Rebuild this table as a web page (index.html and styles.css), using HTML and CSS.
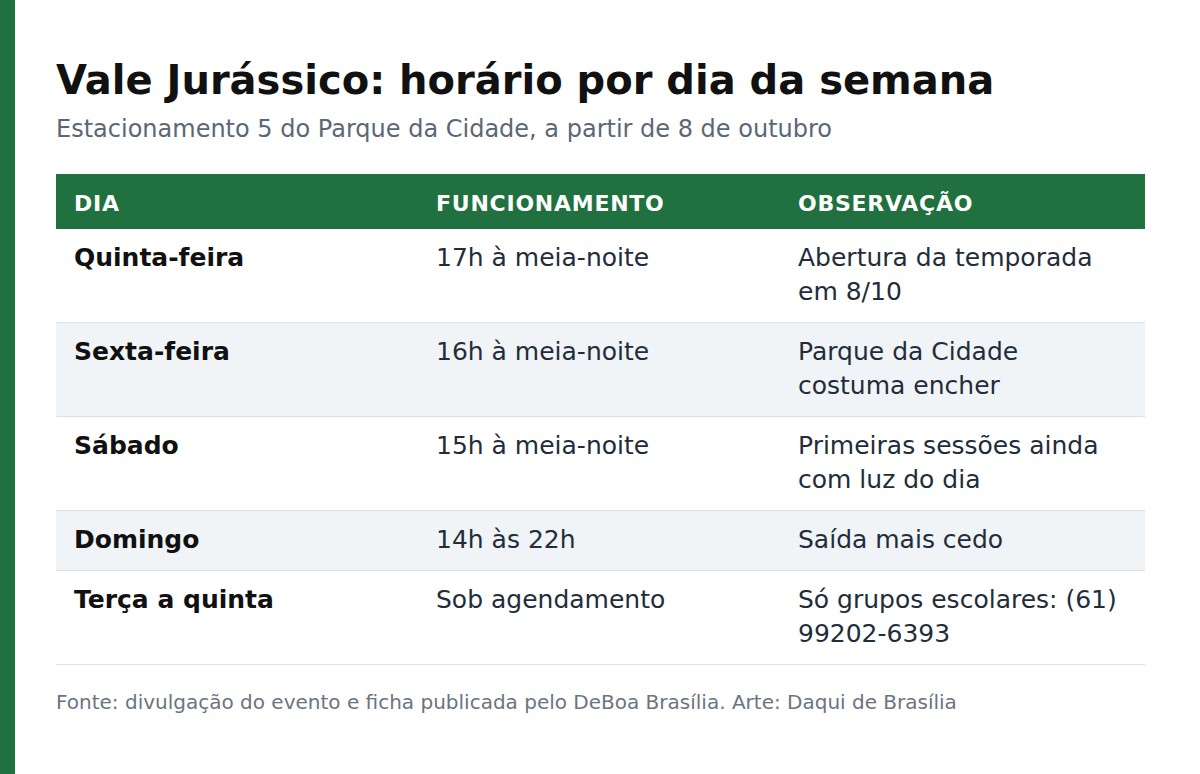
FILE: index.html
```html
<!DOCTYPE html>
<html lang="pt-BR">
<head>
<meta charset="utf-8">
<title>Vale Jurássico</title>
<link rel="stylesheet" href="styles.css">
</head>
<body>
<div class="page">
  <h1 class="title">Vale Jurássico: horário por dia da semana</h1>
  <p class="subtitle">Estacionamento 5 do Parque da Cidade, a partir de 8 de outubro</p>
  <table class="schedule">
    <colgroup><col class="c1"><col class="c2"><col class="c3"></colgroup>
    <thead>
      <tr><th>Dia</th><th>Funcionamento</th><th>Observação</th></tr>
    </thead>
    <tbody>
      <tr><td class="day">Quinta-feira</td><td>17h à meia-noite</td><td>Abertura da temporada em 8/10</td></tr>
      <tr class="alt"><td class="day">Sexta-feira</td><td>16h à meia-noite</td><td>Parque da Cidade costuma encher</td></tr>
      <tr><td class="day">Sábado</td><td>15h à meia-noite</td><td>Primeiras sessões ainda com luz do dia</td></tr>
      <tr class="alt"><td class="day">Domingo</td><td>14h às 22h</td><td>Saída mais cedo</td></tr>
      <tr><td class="day">Terça a quinta</td><td>Sob agendamento</td><td>Só grupos escolares: (61) 99202-6393</td></tr>
    </tbody>
  </table>
  <p class="source">Fonte: divulgação do evento e ficha publicada pelo DeBoa Brasília. Arte: Daqui de Brasília</p>
</div>
</body>
</html>
```

FILE: styles.css
```css
html, body {
  margin: 0;
  padding: 0;
  background: #ffffff;
}
body {
  font-family: "DejaVu Sans", sans-serif;
  border-left: 15px solid #207040;
  min-height: 774px;
  box-sizing: border-box;
}
.page {
  padding: 56px 55px 0 41px;
}
.title {
  margin: 0;
  font-size: 40px;
  line-height: 48px;
  font-weight: bold;
  color: #111111;
}
.subtitle {
  margin: 10px 0 0;
  font-size: 24px;
  line-height: 30px;
  color: #5b6776;
}
.schedule {
  margin-top: 30px;
  width: 100%;
  border-collapse: collapse;
  table-layout: fixed;
}
.schedule col.c1,
.schedule col.c2 {
  width: 362px;
}
.schedule th {
  background: #207040;
  color: #ffffff;
  text-align: left;
  text-transform: uppercase;
  font-size: 22px;
  font-weight: bold;
  letter-spacing: 0.75px;
  padding: 17px 18px 12px;
  line-height: 26px;
}
.schedule td {
  padding: 12px 18px 13px;
  font-size: 25px;
  line-height: 34px;
  color: #232d3a;
  vertical-align: top;
  border-bottom: 1px solid #dbe1e8;
}
.schedule tr.alt td {
  background: #f0f4f7;
}
.schedule td.day {
  font-weight: bold;
  color: #111111;
}
.source {
  margin: 24px 0 0;
  font-size: 20px;
  line-height: 26px;
  color: #6b7480;
}
```
